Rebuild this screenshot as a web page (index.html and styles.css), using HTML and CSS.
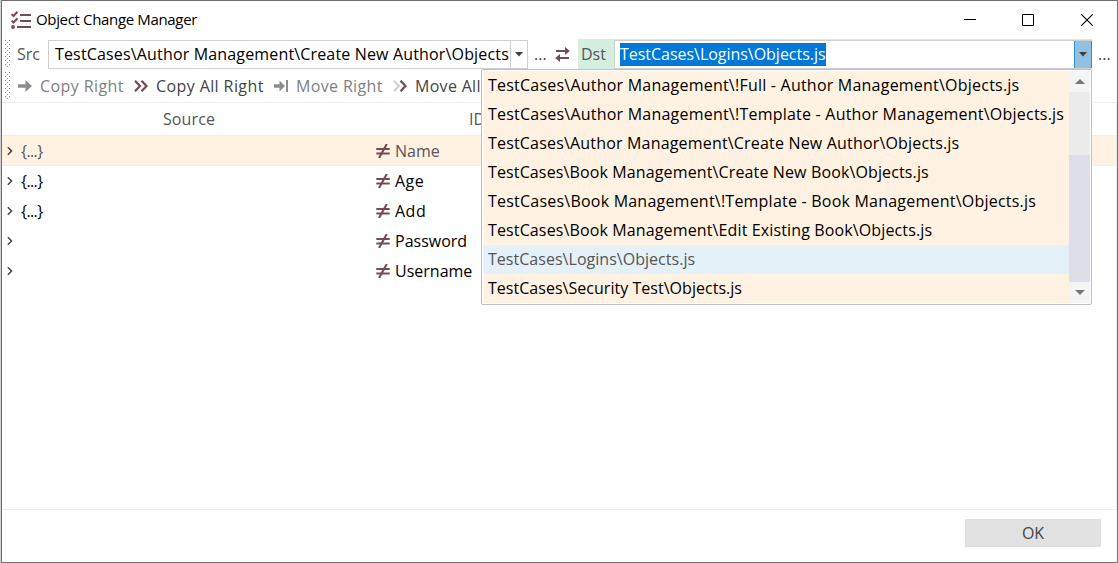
FILE: index.html
```
<!DOCTYPE html>
<html lang="en">
<head>
<meta charset="utf-8">
<title>Object Change Manager</title>
<link rel="stylesheet" href="styles.css">
</head>
<body>
<svg class="defs" width="0" height="0">
  <symbol id="neq" viewBox="0 0 14 14"><path d="M.3 5h13.400M.3 9.500h13.400" fill="none" stroke="#744c55" stroke-width="2"/><path d="M3 14 10.800 0" fill="none" stroke="#744c55" stroke-width="2.100"/></symbol>
  <symbol id="chev" viewBox="0 0 6 10"><path d="M.8 1.200 4.600 5 .8 8.800" fill="none" stroke="#404040" stroke-width="1.400"/></symbol>
</svg>
<div class="window">
  <header class="titlebar">
    <svg class="app-icon" width="21" height="18" viewBox="0 0 21 18"><g fill="none" stroke="#744c55"><path d="M9 4h11M9 10h11M6 16h14" stroke-width="2.200"/><path d="M.5 3.200 2.500 5 6.500.8M.5 9.700 2.500 11.500 6.500 7.300" stroke-width="2"/></g><circle cx="2" cy="16" r="1.900" fill="#744c55"/></svg>
    <span class="title">Object Change Manager</span>
    <div class="controls">
      <svg width="12" height="12" viewBox="0 0 12 12"><path d="M0 5.5h12" stroke="#000"/></svg>
      <svg width="12" height="12" viewBox="0 0 12 12"><path d="M.5.5h11v11H.5z" fill="none" stroke="#000"/></svg>
      <svg width="12" height="12" viewBox="0 0 12 12"><path d="m.3.3 11.4 11.4M11.7.3.3 11.7" stroke="#000" stroke-width="1.1"/></svg>
    </div>
  </header>
  <div class="toolbar paths">
    <i class="grip"></i>
    <span class="label src">Src</span>
    <div class="combo combo-src"><span class="value">TestCases\Author Management\Create New Author\Objects</span><span class="drop"><svg width="8" height="5" viewBox="0 0 8 5"><path d="M0 0h8L4 4.5z" fill="#404040"/></svg></span></div>
    <span class="more">...</span>
    <svg class="swap" width="15" height="15" viewBox="0 0 15 15"><path d="M1 4h11M3 11h11" stroke="#744c55" stroke-width="2"/><path d="m10 0 4.800 4L10 8zM5 7 .2 11 5 15z" fill="#744c55"/></svg>
    <div class="destination"><span class="label dst">Dst</span>
    <div class="combo combo-dst"><span class="value"><mark>TestCases\Logins\Objects.js</mark></span><span class="drop active"><svg width="8" height="5" viewBox="0 0 8 5"><path d="M0 0h8L4 4.5z" fill="#404040"/></svg></span></div></div>
    <span class="more last">...</span>
  </div>
  <div class="toolbar actions">
    <i class="grip"></i>
    <button class="action a1 disabled"><svg width="14" height="12" viewBox="0 0 14 12"><path d="M0 4.300h7.500V0L14 6l-6.500 6V7.700H0z" fill="#8c8c8c"/></svg><span>Copy Right</span></button>
    <button class="action a2"><svg width="14" height="12" viewBox="0 0 14 12"><path d="m1 .7 5 5.3-5 5.3M7.500.7l5 5.300-5 5.300" fill="none" stroke="#744c55" stroke-width="2.200"/></svg><span>Copy All Right</span></button>
    <button class="action a3 disabled"><svg width="14" height="12" viewBox="0 0 14 12"><path d="M0 4.300h5.500V.5L11 6l-5.500 5.500V7.700H0zM12 0h2v12h-2z" fill="#8c8c8c"/></svg><span>Move Right</span></button>
    <button class="action a4"><svg width="14" height="12" viewBox="0 0 14 12"><path d="m1 .7 5 5.300-5 5.300" fill="none" stroke="#d8cdd0" stroke-width="2.200"/><path d="m7.500.7 5 5.300-5 5.300" fill="none" stroke="#744c55" stroke-width="2.200"/></svg><span>Move All</span></button>
  </div>
  <main class="grid">
    <div class="row head"><span class="source">Source</span><span class="id">ID</span></div>
    <div class="row selected"><svg class="chev"><use href="#chev"/></svg><span class="obj">{...}</span><svg class="neq"><use href="#neq"/></svg><span class="name">Name</span></div>
    <div class="row"><svg class="chev"><use href="#chev"/></svg><span class="obj">{...}</span><svg class="neq"><use href="#neq"/></svg><span class="name short">Age</span></div>
    <div class="row"><svg class="chev"><use href="#chev"/></svg><span class="obj">{...}</span><svg class="neq"><use href="#neq"/></svg><span class="name short">Add</span></div>
    <div class="row"><svg class="chev"><use href="#chev"/></svg><span class="obj"></span><svg class="neq"><use href="#neq"/></svg><span class="name">Password</span></div>
    <div class="row"><svg class="chev"><use href="#chev"/></svg><span class="obj"></span><svg class="neq"><use href="#neq"/></svg><span class="name">Username</span></div>
  </main>
  <footer class="footer"><button class="ok">OK</button></footer>
</div>
<div class="menu">
  <ul class="options">
    <li class="wide">TestCases\Author Management\!Full - Author Management\Objects.js</li>
    <li class="wide">TestCases\Author Management\!Template - Author Management\Objects.js</li>
    <li class="medium">TestCases\Author Management\Create New Author\Objects.js</li>
    <li>TestCases\Book Management\Create New Book\Objects.js</li>
    <li class="wide">TestCases\Book Management\!Template - Book Management\Objects.js</li>
    <li>TestCases\Book Management\Edit Existing Book\Objects.js</li>
    <li class="narrow current">TestCases\Logins\Objects.js</li>
    <li class="narrow">TestCases\Security Test\Objects.js</li>
  </ul>
  <div class="scrollbar">
    <span class="arrow"><svg width="10" height="5" viewBox="0 0 10 5"><path d="M0 5h10L5 0z" fill="#777"/></svg></span>
    <span class="thumb"></span>
    <span class="arrow"><svg width="10" height="5" viewBox="0 0 10 5"><path d="M0 0h10L5 5z" fill="#777"/></svg></span>
  </div>
</div>
</body>
</html>
```
FILE: styles.css
```
* { box-sizing: border-box; }
body { margin: 0; width: 1118px; height: 563px; overflow: hidden; background: #d0d0d0; font: 16px/20px "Open Sans", "Noto Sans", sans-serif; letter-spacing: 0; color: #000; }
.defs { position: absolute; }
button { font: inherit; letter-spacing: inherit; border: 0; padding: 0; background: none; }
svg { flex: none; display: block; }
span { white-space: nowrap; }
.window { margin-left: 1px; width: 1117px; height: 563px; border: 1px solid #707070; background: #fff; display: flex; flex-direction: column; }
.titlebar { height: 38px; display: flex; align-items: center; padding: 0 24px 0 9px; flex: none; }
.app-icon { margin-bottom: 1px; }
.title { margin-left: 4px; padding-bottom: 2px; font-size: 15px; letter-spacing: -0.34px; }
.controls { margin-left: auto; display: flex; gap: 47px; }
.controls svg:first-child { margin-right: -1px; }
.toolbar { display: flex; align-items: center; flex: none; }
.paths { height: 30px; }
.actions { height: 33px; }
.grip { width: 6px; height: 28px; margin-left: 3px; flex: none; background: conic-gradient(from 0deg at 1px 1px, transparent 75%, #999 0) 0 0 / 4px 4px, conic-gradient(from 0deg at 1px 1px, transparent 75%, #999 0) 2px 2px / 4px 4px; }
.label { color: #555; flex: none; }
.src { width: 31px; margin-left: 6px; }
.combo { display: flex; height: 29px; border: 1px solid #cfcfcf; background: #fff; overflow: hidden; flex: none; }
.combo .value { flex: 1; min-width: 0; padding-left: 6px; line-height: 27px; overflow: hidden; letter-spacing: 0.16px; }
.combo-src { width: 480px; }
.drop { width: 17px; border-left: 1px solid #cfcfcf; display: flex; align-items: center; justify-content: center; flex: none; }
.more { margin-left: 6px; width: 21px; color: #444; flex: none; }
.more.last { width: 14px; }
.destination { display: flex; align-items: center; height: 30px; margin-left: 8px; background: #d4efdf; flex: none; }
.dst { width: 36px; padding-left: 3px; }
.combo-dst { width: 478px; border-right: 0; }
.combo-dst .value { padding-left: 5px; letter-spacing: -0.03px; }
mark { display: inline-block; background: #0078d7; color: #fff; height: 23px; line-height: 23px; }
.drop.active { background: #91c0e2; border: 1px solid #2d8fd4; width: 18px; height: 29px; margin: -1px 0; }
.action { display: flex; align-items: center; color: #444; letter-spacing: 0.4px; }
.disabled { color: #808080; }
.action span { margin-left: 8px; text-align: left; }
.a1 { margin-left: 7px; width: 116px; }
.a2 { width: 140px; }
.a3 { width: 119px; letter-spacing: 0.35px; }
.a4 { letter-spacing: 0.3px; }
.grid { flex: 1; border: 1px solid #eee; border-left: 0; }
.row { display: flex; align-items: center; height: 30px; }
.head { height: 33px; color: #555; border-bottom: 1px solid #eee; letter-spacing: 0.1px; }
.source { width: 374px; text-align: center; }
.id { margin-left: 93px; }
.selected { background: #fff2e2; color: #555; border-bottom: 1px solid #eee; }
.chev { width: 6px; height: 10px; margin-left: 5px; }
.obj { width: 363px; padding-left: 8px; letter-spacing: -0.6px; }
.neq { width: 14px; height: 14px; }
.name { margin-left: 5px; }
.name.short { letter-spacing: 0.5px; }
.footer { height: 52px; padding: 9px 16px 0; display: flex; justify-content: flex-end; flex: none; }
.ok { width: 136px; height: 28px; background: #e1e1e1; color: #444; }
.menu { position: absolute; left: 481px; top: 69px; width: 611px; height: 236px; border: 1px solid #bfbfbf; border-radius: 2px; background: #fff; padding: 1px; display: flex; }
.options { flex: 1; margin: 0; padding: 0; list-style: none; background: #fff2e2; overflow: hidden; }
.options li { height: 29px; line-height: 29px; padding-left: 5px; white-space: nowrap; letter-spacing: 0.13px; }
.options .wide { letter-spacing: 0.22px; }
.options .medium { letter-spacing: 0.18px; }
.options .narrow { letter-spacing: 0.03px; }
.options .current { background: #e5f1f9; color: #555; }
.scrollbar { width: 21px; background: #ebebeb; display: flex; flex-direction: column; }
.arrow { height: 21px; background: #f4f4f4; display: flex; align-items: center; justify-content: center; }
.thumb { margin-top: auto; height: 127px; background: #dedee8; }
```
